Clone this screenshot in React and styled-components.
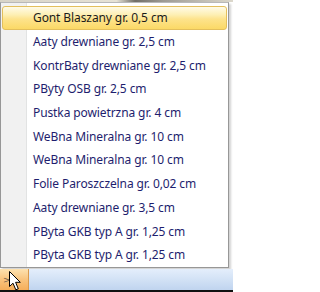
import React from 'react'
import styled, { createGlobalStyle } from 'styled-components'

const items = [
    'Gont Blaszany gr. 0,5 cm',
    'Aaty drewniane gr. 2,5 cm',
    'KontrBaty drewniane gr. 2,5 cm',
    'PByty OSB gr. 2,5 cm',
    'Pustka powietrzna gr. 4 cm',
    'WeBna Mineralna gr. 10 cm',
    'WeBna Mineralna gr. 10 cm',
    'Folie Paroszczelna gr. 0,02 cm',
    'Aaty drewniane gr. 3,5 cm',
    'PByta GKB typ A gr. 1,25 cm',
    'PByta GKB typ A gr. 1,25 cm',
]

const Global = createGlobalStyle`
  html, body { margin: 0; padding: 0; background: #ffffff; }
  body { width: 233px; height: 292px; overflow: hidden; }
`

const Cursor = () => (
    <svg width="13" height="20" viewBox="0 0 13 20">
        <path d="M0.5 0.5 L0.5 15.5 L4 12.2 L6.8 18.8 L9.3 17.8 L6.6 11.3 L11.3 11.3 Z"
            fill="#ffffff" stroke="#000000" strokeWidth="1" strokeLinejoin="miter" />
    </svg>
)

const App = () => {
    return (
        <Screen>
            <Global />
            <TopStrip />
            <Menu>
                {items.map((text, i) => (
                    <Item key={i} $active={i === 0}>
                        <Gutter />
                        <Label $active={i === 0}>{text}</Label>
                    </Item>
                ))}
            </Menu>
            <Taskbar>
                <StartButton>
                    <Chevron>&gt;</Chevron>
                    <CursorSpot><Cursor /></CursorSpot>
                </StartButton>
            </Taskbar>
            <BottomEdge />
        </Screen>
    )
}

export default App;

const Screen = styled.div`
  width: 233px;
  height: 292px;
  overflow: hidden;
  display: flex;
  flex-direction: column;
  background: #ffffff;
  font-family: "Noto Sans", "Open Sans", sans-serif;
`;

const TopStrip = styled.div`
  height: 2px;
  flex: none;
  background: linear-gradient(90deg, #d8d4c8 0%, #e6e2d6 50%, #6f6d68 58%, #9c9a94 70%, #dcd8cc 100%);
`;

const Menu = styled.div`
  width: 229px;
  height: 266px;
  flex: none;
  box-sizing: border-box;
  border: 1px solid #979797;
  border-top-color: #b8b8b8;
  padding: 3px 1px 0;
  display: flex;
  flex-direction: column;
  background: linear-gradient(90deg, #f1f1f1 0, #f1f1f1 25px, #e2e3e3 25px, #e2e3e3 26px, #ffffff 26px);
  box-shadow: 2px 2px 2px rgba(0, 0, 0, 0.18);
`;

const Item = styled.div`
  height: 23.7px;
  flex: none;
  display: flex;
  align-items: center;
  box-sizing: border-box;
  border-radius: 3px;
  border: 1px solid ${({ $active }) => ($active ? '#e3bf5c' : 'transparent')};
  background: ${({ $active }) =>
        $active
            ? 'linear-gradient(180deg, #fffbe8 0%, #fdefb4 35%, #fde38c 55%, #fbd966 100%)'
            : 'transparent'};
`;

const Gutter = styled.div`
  width: 30px;
  flex: none;
`;

const Label = styled.span`
  font-size: 12px;
  letter-spacing: -0.1px;
  color: ${({ $active }) => ($active ? '#1b1b1b' : '#1e1e6e')};
  white-space: nowrap;
`;

const Taskbar = styled.div`
  margin-top: 1px;
  height: 21px;
  flex: none;
  display: flex;
  background: linear-gradient(180deg, #e4eefb 0%, #d4e3f6 45%, #c0d4ef 100%);
`;

const StartButton = styled.div`
  position: relative;
  width: 28px;
  display: flex;
  align-items: center;
  background: linear-gradient(180deg, #fde2b0 0%, #f9c47e 50%, #f5ae5a 100%);
  border-right: 1px solid #d99a4c;
`;

const Chevron = styled.span`
  font-size: 9px;
  color: #6a5a4a;
  padding-left: 3px;
  font-family: "DejaVu Sans", sans-serif;
`;

const CursorSpot = styled.div`
  position: absolute;
  left: 9px;
  top: 2px;
  line-height: 0;
`;

const BottomEdge = styled.div`
  height: 2px;
  flex: none;
  background: #101010;
`;
